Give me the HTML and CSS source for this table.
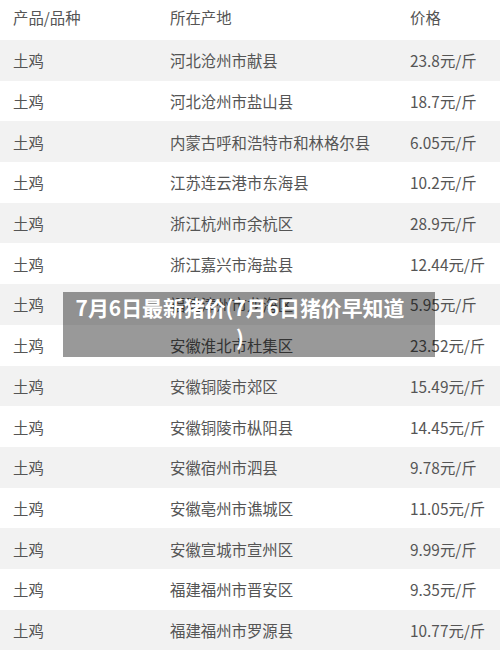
FILE: index.html
```html
<!DOCTYPE html>
<html lang="zh-CN">
<head>
<meta charset="utf-8">
<title>7月6日最新猪价</title>
<link rel="stylesheet" href="styles.css">
</head>
<body>
<div class="page">
  <div class="table">
    <div class="row head"><div>产品/品种</div><div>所在产地</div><div>价格</div></div>
    <div class="row"><div>土鸡</div><div>河北沧州市献县</div><div>23.8元/斤</div></div>
    <div class="row"><div>土鸡</div><div>河北沧州市盐山县</div><div>18.7元/斤</div></div>
    <div class="row"><div>土鸡</div><div>内蒙古呼和浩特市和林格尔县</div><div>6.05元/斤</div></div>
    <div class="row"><div>土鸡</div><div>江苏连云港市东海县</div><div>10.2元/斤</div></div>
    <div class="row"><div>土鸡</div><div>浙江杭州市余杭区</div><div>28.9元/斤</div></div>
    <div class="row"><div>土鸡</div><div>浙江嘉兴市海盐县</div><div>12.44元/斤</div></div>
    <div class="row"><div>土鸡</div><div>福建漳州市龙海区</div><div>5.95元/斤</div></div>
    <div class="row"><div>土鸡</div><div>安徽淮北市杜集区</div><div>23.52元/斤</div></div>
    <div class="row"><div>土鸡</div><div>安徽铜陵市郊区</div><div>15.49元/斤</div></div>
    <div class="row"><div>土鸡</div><div>安徽铜陵市枞阳县</div><div>14.45元/斤</div></div>
    <div class="row"><div>土鸡</div><div>安徽宿州市泗县</div><div>9.78元/斤</div></div>
    <div class="row"><div>土鸡</div><div>安徽亳州市谯城区</div><div>11.05元/斤</div></div>
    <div class="row"><div>土鸡</div><div>安徽宣城市宣州区</div><div>9.99元/斤</div></div>
    <div class="row"><div>土鸡</div><div>福建福州市晋安区</div><div>9.35元/斤</div></div>
    <div class="row"><div>土鸡</div><div>福建福州市罗源县</div><div>10.77元/斤</div></div>
  </div>
  <div class="caption">7月6日最新猪价(7月6日猪价早知道)</div>
</div>
</body>
</html>
```

FILE: styles.css
```css
html, body {
  margin: 0;
  padding: 0;
  background: #fff;
}
.page {
  position: relative;
  width: 500px;
  height: 650px;
  overflow: hidden;
  font-family: "Noto Sans CJK SC", "Noto Sans", sans-serif;
}
.table {
  display: flex;
  flex-direction: column;
}
.row {
  display: grid;
  grid-template-columns: 157px 240px 1fr;
  align-items: center;
  height: 40.7px;
  padding-left: 13px;
  font-size: 15.4px;
  color: #555;
}
.row.head {
  height: 40px;
  align-items: start;
  padding-top: 6px;
  box-sizing: border-box;
  background: #fff;
}
.row:nth-child(even) {
  background: #f2f2f2;
}
.caption {
  position: absolute;
  left: 63px;
  top: 292px;
  width: 334px;
  padding: 0 28px 5px 10px;
  background: rgba(0, 0, 0, 0.4);
  color: #fff;
  font-weight: bold;
  font-size: 20.9px;
  line-height: 30px;
  text-align: center;
  line-break: anywhere;
}
```
